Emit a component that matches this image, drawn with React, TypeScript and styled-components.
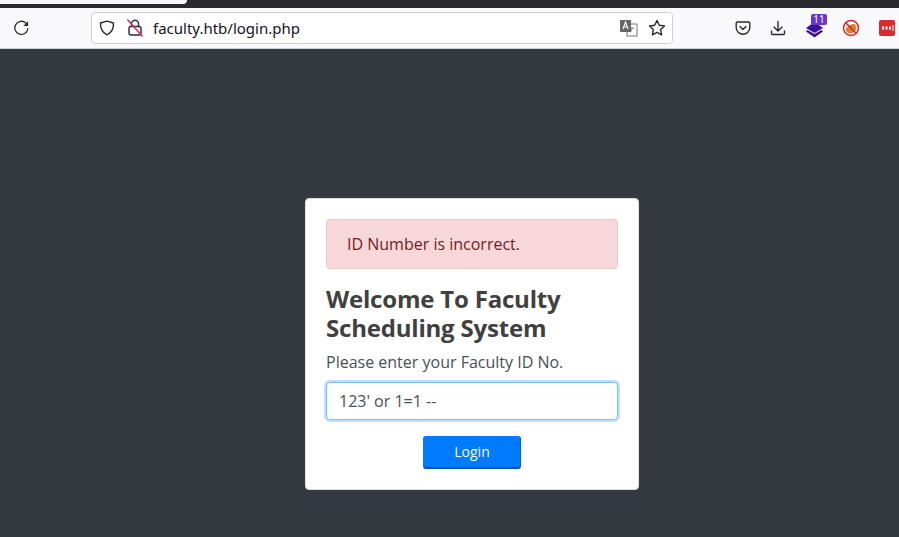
import React from "react";
import styled, { createGlobalStyle } from "styled-components";

const Global = createGlobalStyle`
  html, body { margin: 0; padding: 0; height: 100%; background: #343a40; overflow: hidden; }
  #root { width: 899px; height: 537px; }
  * { box-sizing: border-box; }
`;
const Page = styled.div`
  width: 899px; height: 537px; display: flex; flex-direction: column;
  font-family: "Open Sans", "Noto Sans", sans-serif; background: #343a40; color: #495057;
`;
const TabStrip = styled.div`
  height: 8px; background: #2b2a2e; flex: none; display: flex; align-items: flex-start;
`;
const ActiveTab = styled.div`
  width: 187px; height: 4px; background: #f9f9fb; border-bottom-right-radius: 4px;
`;
const Toolbar = styled.div`
  height: 41px; flex: none; background: #f9f9fb; border-bottom: 1px solid #cfcfd8;
  display: flex; align-items: center; padding: 0 11px 0 13px;
`;
const ToolIcon = styled.span<{ $ml?: number }>`
  display: flex; flex: none; margin-left: ${p => p.$ml ?? 0}px; position: relative;
`;
const UrlBar = styled.div`
  width: 582px; height: 32px; margin-left: 62px; background: #fff; border: 1px solid #cfcfd8; border-radius: 4px;
  display: flex; align-items: center; padding: 0 6px 0 7px; flex: none;
`;
const UrlText = styled.span`
  font-family: "Noto Sans", "Open Sans", sans-serif; font-size: 15px; color: #15141a; margin-left: 10px; flex: 1;
`;
const Badge = styled.span`
  position: absolute; top: -5px; left: 5px; width: 16px; height: 11px; border-radius: 2px; background: #6a35c9;
  color: #fff; font: 10px/11px "Noto Sans", sans-serif; text-align: center;
`;
const Main = styled.main`
  flex: 1; display: flex; flex-direction: column; align-items: center; padding: 149px 0 0 45px;
`;
const Card = styled.section`
  width: 334px; height: 292px; background: #fff; border: 1px solid #dfdfdf; border-radius: 4px;
  padding: 20px;
`;
const Alert = styled.div`
  height: 50px; background: #f8d7da; border: 1px solid #f5c6cb; border-radius: 4px; color: #721c24;
  font-size: 16px; line-height: 24px; padding: 12px 20px; margin-bottom: 16px;
`;
const Title = styled.h4`
  margin: 0 0 7px; font-family: "Open Sans", sans-serif; font-weight: 700; font-size: 24px; line-height: 28.8px; color: #404040;
  letter-spacing: -0.2px;
`;
const Prompt = styled.label`
  display: block; font-size: 16px; line-height: 24px; color: #495057; margin-bottom: 8px;
`;
const Field = styled.input`
  display: block; width: 100%; height: 38px; border: 1px solid #80bdff; border-radius: 4px; outline: 0;
  box-shadow: 0 0 0 2px rgba(0,123,255,.25); padding: 6px 12px; font: 16px/24px "Open Sans", sans-serif; color: #495057; background: #fff;
`;
const Actions = styled.div`
  display: flex; justify-content: center; margin-top: 16px;
`;
const LoginButton = styled.button`
  width: 98px; height: 33px; background: #007bff; color: #fff; border: 1px solid #007bff; border-bottom: 2px solid #0056a8;
  border-right-color: #0062cc; border-radius: 3px; font: 14px/21px "Open Sans", sans-serif; padding: 0;
`;

const S = { fill: "none", stroke: "#2b2a33", strokeWidth: 1.4, strokeLinecap: "round" as const, strokeLinejoin: "round" as const };

export default function App() {
  return (
    <Page>
      <Global />
      <TabStrip><ActiveTab /></TabStrip>
      <Toolbar>
        <ToolIcon $ml={1}>
          <svg width="15" height="16" viewBox="0 0 16 16" {...S}><path d="M14.800 8.800A7 7 0 1 1 12.500 2.600L14.300 4.300" /><path d="M15 0.800v5H10z" fill="#2b2a33" stroke="none" /></svg>
        </ToolIcon>
        <UrlBar>
          <svg width="16" height="16" viewBox="0 0 16 16" {...S}><path d="M8 1.200 14.500 3c.2 5.500-1.700 9.500-6.500 11.800C3.200 12.500 1.300 8.500 1.500 3z" /></svg>
          <ToolIcon $ml={12}>
            <svg width="16" height="18" viewBox="0 0 16 18" {...S}>
              <path d="M4.500 7V4.800a3.500 3.500 0 0 1 7 0V7" />
              <rect x="2" y="7.500" width="12" height="8.500" rx="2" />
              <path d="M0.800 1 15 17" stroke="#e22850" strokeWidth="1.500" />
            </svg>
          </ToolIcon>
          <UrlText>faculty.htb/login.php</UrlText>
          <ToolIcon>
            <svg width="19" height="18" viewBox="0 0 19 18">
              <rect x="8" y="5" width="10" height="12" fill="#fff" stroke="#777" />
              <path d="M11 9h4M13 9c0 2-1 4-2 4" fill="none" stroke="#777" />
              <rect x="1" y="1" width="11" height="12" fill="#666" />
              <path d="M4 10l2.500-7L9 10M4.800 8h3.400" fill="none" stroke="#fff" strokeWidth="1.100" />
            </svg>
          </ToolIcon>
          <ToolIcon $ml={10}>
            <svg width="18" height="18" viewBox="0 0 18 18" {...S}><path d="M9 1.500l2.300 4.800 5.200.7-3.800 3.600.9 5.200L9 13.300l-4.600 2.500.9-5.200L1.500 7l5.200-.7z" /></svg>
          </ToolIcon>
        </UrlBar>
        <ToolIcon $ml={62}>
          <svg width="16" height="16" viewBox="0 0 16 16" {...S}><path d="M2.500 2h11c.8 0 1.300.6 1.300 1.300v4.200a6.800 6.800 0 0 1-13.600 0V3.300C1.200 2.600 1.700 2 2.500 2z" /><path d="M5 6.500l3 3 3-3" /></svg>
        </ToolIcon>
        <ToolIcon $ml={19}>
          <svg width="16" height="16" viewBox="0 0 16 16" {...S}><path d="M8 1.500v9M4 7l4 4 4-4M1.500 11v2.500c0 .6.400 1 1 1h11c.6 0 1-.4 1-1V11" /></svg>
        </ToolIcon>
        <ToolIcon $ml={20}>
          <svg width="17" height="16" viewBox="0 0 17 16" fill="#3d0f9e" style={{ marginTop: 3 }}><path d="M8.500 0 17 6l-8.500 5L0 6z" /><path d="M1.500 8 8.500 12l7-4L17 9.500 8.500 15.500 0 9.500z" /></svg>
          <Badge>11</Badge>
        </ToolIcon>
        <ToolIcon $ml={19}>
          <svg width="18" height="18" viewBox="0 0 18 18">
            <circle cx="9" cy="9" r="7.500" fill="#fff" stroke="#d9222a" strokeWidth="1.500" />
            <path d="M3.500 11c1-4 5-6 9-6l2 3c0 4-3 6-6 6.500-2 0-4-1-5-3.500z" fill="#d9822b" />
            <path d="M3.500 3.500l11 11" stroke="#d9222a" strokeWidth="1.500" />
          </svg>
        </ToolIcon>
        <ToolIcon $ml={19}>
          <svg width="17" height="17" viewBox="0 0 17 17"><rect width="16" height="16" rx="2" fill="#d92b2b" /><path d="M3 6.500h2v3H3zM6.500 6.500h2v3h-2zM10 6.500h2v3h-2z" fill="#fff" /><path d="M14 5v6" stroke="#fff" /></svg>
        </ToolIcon>
      </Toolbar>
      <Main>
        <Card>
          <Alert>ID Number is incorrect.</Alert>
          <Title>Welcome To Faculty Scheduling System</Title>
          <Prompt>Please enter your Faculty ID No.</Prompt>
          <Field readOnly value="123' or 1=1 --" />
          <Actions><LoginButton>Login</LoginButton></Actions>
        </Card>
      </Main>
    </Page>
  );
}
